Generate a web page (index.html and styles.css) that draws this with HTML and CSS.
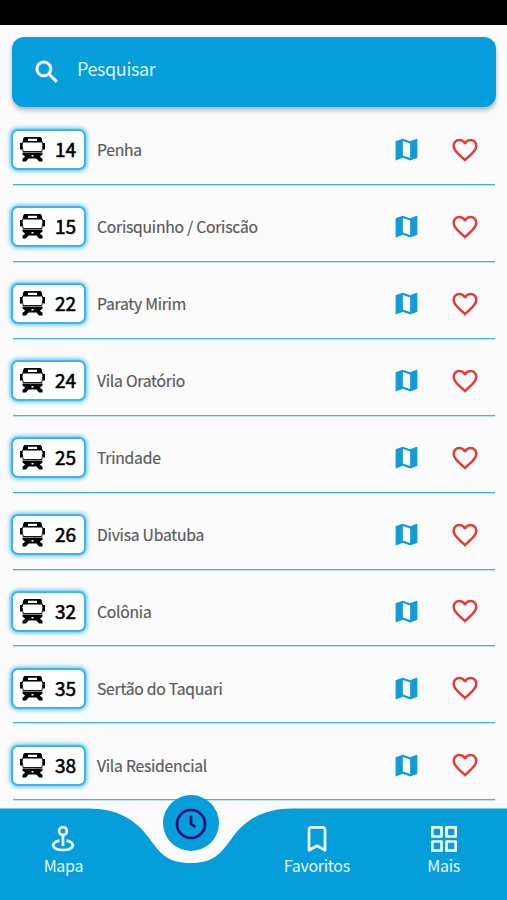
FILE: index.html
```html
<!DOCTYPE html>
<html lang="pt-BR">
<head>
<meta charset="utf-8">
<meta name="viewport" content="width=device-width, initial-scale=1">
<title>Linhas</title>
<link rel="stylesheet" href="styles.css">
</head>
<body>
<svg width="0" height="0" class="defs" aria-hidden="true">
  <symbol id="bus" viewBox="0 0 25 25">
    <path fill-rule="evenodd" d="M4.500 0h16l1.200 1.200.8 4.300H2.500l.8-4.300zM8 1.800v2.200h9V1.800z"/>
    <path d="M2.500 5l-.3 3.500.9 6h18.800l.9-6-.3-3.500" fill="none" stroke="#000" stroke-width=".9"/>
    <path d="M0 6h2v6.500H0zM23 6h2v6.500h-2z"/>
    <path fill-rule="evenodd" d="M2.500 15.500h20v2l-2.700 2.200 2.700 2v2.800h-3.500L16.500 21.500h-8L6 24.500H2.500v-2.800l2.700-2-2.700-2.200zM11.500 18v1.500h2V18z"/>
  </symbol>
  <symbol id="map" viewBox="0 0 24 24">
    <path fill-rule="evenodd" d="M20.500 3l-.16.03L15 5.100 9 3 3.360 4.900c-.21.070-.36.250-.36.480V20.500c0 .280.220.5.500.5l.16-.03L9 18.900l6 2.100 5.640-1.900c.21-.07.360-.25.360-.48V3.500c0-.28-.22-.5-.5-.5zM15 19l-6-2.110V5l6 2.110V19z"/>
  </symbol>
  <symbol id="heart" viewBox="0 0 24 24">
    <path d="M16.500 3c-1.740 0-3.410.81-4.500 2.090C10.910 3.810 9.240 3 7.500 3 4.420 3 2 5.420 2 8.500c0 3.780 3.400 6.860 8.550 11.540L12 21.350l1.450-1.320C18.600 15.360 22 12.280 22 8.500 22 5.420 19.580 3 16.500 3zm-4.400 15.550l-.1.100-.1-.1C7.140 14.240 4 11.390 4 8.500 4 6.500 5.500 5 7.500 5c1.540 0 3.040.99 3.570 2.360h1.870C13.460 5.990 14.960 5 16.500 5c2 0 3.500 1.500 3.500 3.500 0 2.890-3.140 5.740-7.900 10.050z"/>
  </symbol>
</svg>
<div class="status"></div>
<main class="screen">
  <div class="search">
    <svg class="search-icon" viewBox="0 0 24 24"><path d="M15.500 14h-.79l-.28-.27C15.410 12.590 16 11.110 16 9.500 16 5.910 13.090 3 9.500 3S3 5.910 3 9.500 5.910 16 9.500 16c1.610 0 3.090-.59 4.230-1.570l.27.28v.79l5 4.990L20.490 19l-4.990-5zm-6 0C7.010 14 5 11.990 5 9.500S7.010 5 9.500 5 14 7.010 14 9.500 11.990 14 9.500 14z"/></svg>
    <span>Pesquisar</span>
  </div>
  <ul class="lines">
    <li><span class="badge"><svg><use href="#bus"/></svg><b>14</b></span><span class="name">Penha</span><svg class="map"><use href="#map"/></svg><svg class="heart"><use href="#heart"/></svg></li>
    <li><span class="badge"><svg><use href="#bus"/></svg><b>15</b></span><span class="name">Corisquinho / Coriscão</span><svg class="map"><use href="#map"/></svg><svg class="heart"><use href="#heart"/></svg></li>
    <li><span class="badge"><svg><use href="#bus"/></svg><b>22</b></span><span class="name">Paraty Mirim</span><svg class="map"><use href="#map"/></svg><svg class="heart"><use href="#heart"/></svg></li>
    <li><span class="badge"><svg><use href="#bus"/></svg><b>24</b></span><span class="name">Vila Oratório</span><svg class="map"><use href="#map"/></svg><svg class="heart"><use href="#heart"/></svg></li>
    <li><span class="badge"><svg><use href="#bus"/></svg><b>25</b></span><span class="name">Trindade</span><svg class="map"><use href="#map"/></svg><svg class="heart"><use href="#heart"/></svg></li>
    <li><span class="badge"><svg><use href="#bus"/></svg><b>26</b></span><span class="name">Divisa Ubatuba</span><svg class="map"><use href="#map"/></svg><svg class="heart"><use href="#heart"/></svg></li>
    <li><span class="badge"><svg><use href="#bus"/></svg><b>32</b></span><span class="name">Colônia</span><svg class="map"><use href="#map"/></svg><svg class="heart"><use href="#heart"/></svg></li>
    <li><span class="badge"><svg><use href="#bus"/></svg><b>35</b></span><span class="name">Sertão do Taquari</span><svg class="map"><use href="#map"/></svg><svg class="heart"><use href="#heart"/></svg></li>
    <li><span class="badge"><svg><use href="#bus"/></svg><b>38</b></span><span class="name">Vila Residencial</span><svg class="map"><use href="#map"/></svg><svg class="heart"><use href="#heart"/></svg></li>
  </ul>
</main>
<nav class="tabs">
  <svg class="wave" viewBox="0 0 507 92"><path d="M0 .5H88C118 .5 136 12 149 30C161 46 167 55 190.500 55S220 46 232 30C245 12 263 .5 293 .5H507V92H0z"/></svg>
  <div class="tab">
    <svg viewBox="0 0 26 26"><circle cx="13" cy="5" r="3.900"/><path d="M13 9v11M9.500 14.700C.5 16 .5 24 13 24s12.500-8 3.500-9.300"/></svg>
    <span>Mapa</span>
  </div>
  <div class="tab active">
    <span class="disc"><svg viewBox="0 0 32 32"><circle cx="16" cy="16" r="14"/><path d="M16 7.500V16l4.500 3"/></svg></span>
  </div>
  <div class="tab">
    <svg viewBox="0 0 26 26"><path d="M5 24.300V4q0-2.700 2.700-2.700h10.600Q21 1.300 21 4v20.300l-8-4.500z"/></svg>
    <span>Favoritos</span>
  </div>
  <div class="tab">
    <svg viewBox="0 0 26 26"><path d="M1.300 1.300h9.200v9.200H1.300zM15.500 1.300h9.200v9.200h-9.200zM1.300 15.500h9.200v9.200H1.300zM15.500 15.500h9.200v9.200h-9.200z"/></svg>
    <span>Mais</span>
  </div>
</nav>
</body>
</html>
```
FILE: styles.css
```css
* { box-sizing: border-box; }
body {
  margin: 0;
  height: 900px;
  display: flex;
  flex-direction: column;
  overflow: hidden;
  background: #fbfbfb;
  font-family: "Noto Sans CJK JP", "Open Sans", sans-serif;
}
.defs { position: absolute; }
.status { height: 25px; background: #000; flex: none; }
.screen { height: 783px; flex: none; padding: 12px 11px 0 12px; }
.search {
  height: 70px;
  border-radius: 12px;
  background: #059edb;
  box-shadow: 0 3px 5px rgba(0, 0, 0, .3);
  display: flex;
  align-items: center;
  padding-left: 20px;
  color: #dff5ff;
  font-size: 18px;
  letter-spacing: -.4px;
}
.search-icon { width: 30px; height: 30px; fill: #fff; stroke: #fff; stroke-width: .4; margin-right: 15px; }
.search span { line-height: 24px; padding-bottom: 9px; }
.lines { list-style: none; margin: 1px 1px 0 0; padding: 0 0 0 1px; }
.lines li {
  height: 76.93px;
  display: flex;
  align-items: center;
  padding-top: 8px;
  border-bottom: 1px solid #45afdc;
  box-shadow: 0 1px #bfe3f3;
}
.badge {
  width: 75px;
  height: 41px;
  margin-left: -2px;
  border: 2px solid #3db4ea;
  border-radius: 7px;
  background: #fff;
  box-shadow: 0 0 4px 1px #50c0f3;
  display: flex;
  align-items: center;
  padding-left: 7px;
  flex: none;
}
.badge svg { width: 25px; height: 25px; margin-right: 10px; }
.badge b { font-size: 19px; line-height: 24px; font-weight: 400; padding-bottom: 1px; -webkit-text-stroke: .6px #000; }
.name {
  flex: 1;
  margin-left: 11px;
  padding-top: 1px;
  font-size: 15.700px;
  letter-spacing: -.24px;
  line-height: 24px;
  color: #5a5a5a;
  -webkit-text-stroke: .2px #5a5a5a;
}
.map { width: 29px; height: 29px; fill: #149bd6; margin-right: 29px; }
.heart { width: 30px; height: 30px; fill: #e23c36; margin-right: 15px; }
.tabs {
  position: relative;
  height: 92px;
  flex: none;
  display: grid;
  grid-template-columns: repeat(4, 1fr);
}
.wave { position: absolute; inset: 0; width: 507px; height: 92px; fill: #059edb; }
.tab {
  position: relative;
  display: flex;
  flex-direction: column;
  align-items: center;
  padding: 18px 0 0;
  color: #e4f7ff;
  font-size: 16px;
  letter-spacing: -.3px;
  line-height: 24px;
}
.tab svg { width: 26px; height: 26px; fill: none; stroke: #eefaff; stroke-width: 2.700; margin-bottom: 1px; stroke-linejoin: round; }
.active { padding: 0 0 0 1px; }
.disc {
  width: 56px;
  height: 56px;
  margin-top: -13px;
  border-radius: 50%;
  background: #059edb;
  display: flex;
  align-items: center;
  justify-content: center;
}
.tab .disc svg { width: 32px; height: 32px; margin: 1px 0 0; stroke: #040c80; }
```
